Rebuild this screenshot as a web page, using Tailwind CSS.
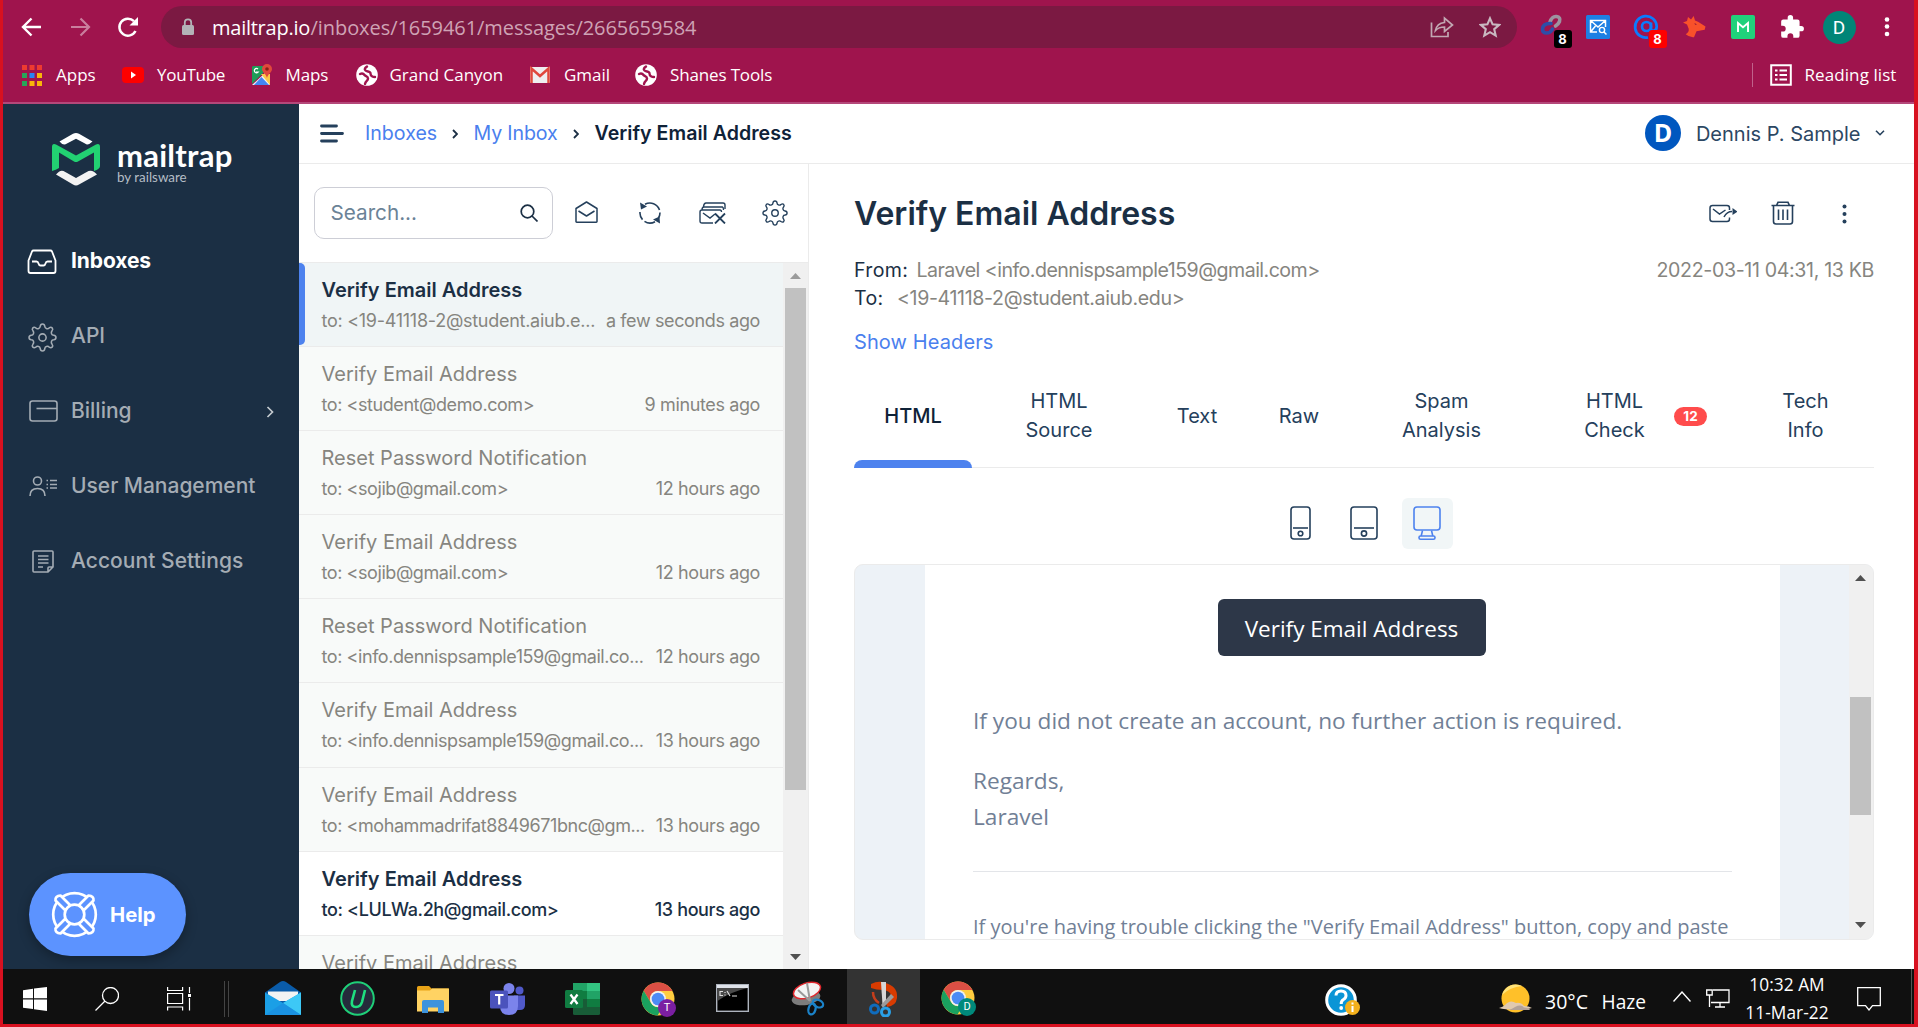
<!DOCTYPE html>
<html lang="en">
<head>
<meta charset="utf-8">
<title>Verify Email Address - Mailtrap</title>
<script src="https://cdn.jsdelivr.net/npm/@tailwindcss/browser@4"></script>
</head>
<body class="w-[1918px] h-[1027px] overflow-hidden bg-white">
<svg class="hidden">
  <defs>
    <symbol id="gear" viewBox="0 0 28 28"><g fill="none" stroke="currentColor" stroke-width="1.500" stroke-linejoin="round"><path d="M11.8 3.2Q12 1 14 1T16.200 3.200Q16.300 4.900 17.700 5.300Q19.300 6 20.400 4.800Q22.100 3.600 23.300 4.700Q24.500 6 23.200 7.600Q22.100 8.700 22.700 10.300Q23.200 11.700 24.800 11.800Q27 12 27 14T24.800 16.200Q23.200 16.300 22.700 17.700Q22.100 19.300 23.200 20.400Q24.500 22 23.300 23.300Q22.100 24.400 20.400 23.200Q19.300 22 17.700 22.700Q16.300 23.100 16.200 24.800Q16 27 14 27T11.800 24.800Q11.700 23.100 10.300 22.700Q8.700 22 7.600 23.200Q5.900 24.400 4.700 23.300Q3.500 22 4.800 20.400Q5.900 19.300 5.300 17.700Q4.800 16.300 3.200 16.200Q1 16 1 14T3.200 11.800Q4.800 11.700 5.300 10.300Q5.900 8.700 4.800 7.600Q3.500 6 4.700 4.700Q5.900 3.600 7.600 4.800Q8.700 6 10.300 5.300Q11.700 4.900 11.800 3.200Z"/><circle cx="14" cy="14" r="3.500"/></g></symbol>
    <symbol id="globe" viewBox="0 0 22 22"><circle cx="11" cy="11" r="10.800" fill="#fff"/><path d="M4 10c2-1 3.500-.5 4.500 1s3.500 1 3.500 3.500-2.500 2-3 5.500M11 2.500C9 4 8 5 9.500 6.500s5 .5 5 3 2.500 3.500 4.500 3.500" fill="none" stroke="#9f144d" stroke-width="2.400" stroke-linecap="round"/></symbol>
    <symbol id="chrome" viewBox="0 0 34 34"><circle cx="17" cy="17" r="16.500" fill="#ffcd40"/><path d="M2.700 8.800A16.500 16.500 0 0 1 31.500 9H17a8 8 0 0 0-7 12z" fill="#db4f44"/><path d="M2.700 8.800A16.500 16.500 0 0 0 16.500 33.500L24 21a8 8 0 0 1-14 0z" fill="#1aa15f"/><circle cx="17" cy="17" r="8" fill="#f1f1f1"/><circle cx="17" cy="17" r="6.300" fill="#4b8bf5"/></symbol>
  </defs>
</svg>
<div class="flex h-full w-full flex-col border-x-[3px] border-b-[3px] border-[#d81120] border-r-4">

  <!-- Browser toolbar -->
  <header class="flex h-[104px] shrink-0 flex-col border-b-2 border-[#b4487a] bg-[#9f144d] text-white font-['Open_Sans',sans-serif]">
    <div class="flex h-[54px] items-center pl-[17px]">
      <svg class="h-6 w-6 shrink-0" viewBox="0 0 24 24" fill="none" stroke="#fff" stroke-width="2.400"><path d="M21 12H3M11.500 3.500L3 12l8.500 8.500"/></svg>
      <svg class="ml-6 h-6 w-6 shrink-0 opacity-45" viewBox="0 0 24 24" fill="none" stroke="#fff" stroke-width="2.200"><path d="M3 12h18M12.500 3.500L21 12l-8.500 8.500"/></svg>
      <svg class="ml-6 h-6 w-6 shrink-0" viewBox="0 0 24 24"><path d="M19.500 16A8.500 8.500 0 1 1 18 6.200" fill="none" stroke="#fff" stroke-width="2.500"/><path d="M22 2v8.500h-8.500z" fill="#fff"/></svg>
      <div class="ml-[21px] flex h-[42px] w-[1356px] items-center rounded-full bg-[#7b1942] pl-[21px] text-[20px] whitespace-pre">
        <svg class="h-[18px] w-3 shrink-0" viewBox="0 0 12 18"><rect y="7" width="12" height="10" rx="1.500" fill="#b3b3b7"/><path d="M2.800 8V4.500a3.200 3.200 0 0 1 6.400 0V8" fill="none" stroke="#b3b3b7" stroke-width="1.800"/></svg>
        <span class="ml-[18px] w-[98.500px] tracking-[-0.25px] mt-px">mailtrap.io</span><span class="mt-px tracking-[-0.06px] text-[#cfa3b5]">/inboxes/1659461/messages/2665659584</span>
        <svg class="ml-auto h-[22px] w-6 shrink-0" viewBox="0 0 24 22" fill="none" stroke="#c2a8b3" stroke-width="1.700" stroke-linejoin="miter"><path d="M1.500 6.500V20.500H18V16"/><path d="M5.500 14.500C6.500 9 9.500 7 14.500 6.500V2l8 7-8 6.500V11c-4 0-6.500.7-9 3.500z"/></svg>
        <svg class="ml-[25px] mr-[16px] h-[22px] w-[22px] shrink-0" viewBox="0 0 22 22" fill="none" stroke="#c9b8c0" stroke-width="2.100"><path d="M11 2.300l2.600 6 6.500.6-4.900 4.300 1.500 6.400L11 16.200l-5.700 3.400 1.500-6.400L1.900 8.900l6.500-.6z"/></svg>
      </div>
      <div class="relative ml-[20.500px] h-[34px] w-[34px]">
        <svg class="h-8 w-8" viewBox="0 0 32 32" fill="none" stroke-width="3.600" stroke-linecap="round"><path d="M12 12q2-6 6.500-5.500 4.500.7 3 5-1 2.500-4 4.500" stroke="#9d93a0"/><path d="M13 13.500q-8-.5-8.500 5.500 0 4 4 4t6-4" stroke="#2d4ea8"/></svg>
        <span class="absolute top-[20px] left-[16px] h-[18px] w-[18px] rounded-[3px] bg-black text-center font-[Inter] text-[13px] leading-[19px] font-bold">8</span>
      </div>
      <svg class="ml-[14px] h-6 w-6 shrink-0" viewBox="0 0 24 24"><rect width="24" height="24" rx="1.500" fill="#1d7fe3"/><path d="M19.500 12V5.500h-15V17H11M4.500 5.500L12 12l7.500-6.500M4.500 17L9.500 11" fill="none" stroke="#fff" stroke-width="1.500"/><circle cx="16" cy="15" r="2.600" fill="none" stroke="#fff" stroke-width="1.400"/><path d="M18 17l2.500 2.500" stroke="#fff" stroke-width="1.500"/></svg>
      <div class="relative ml-[23px] h-[34px] w-[35px]">
        <svg class="mt-[4px] h-[26px] w-[26px]" viewBox="0 0 26 26" fill="none" stroke="#0a7cff" stroke-width="2.700"><circle cx="13.500" cy="12.500" r="4.500"/><path d="M18 8.500v6c0 3.500 5.700 3 5.700-2A10.800 10.800 0 1 0 15 23.500"/></svg>
        <span class="absolute top-[20px] left-[16px] h-[18px] w-[18px] rounded-[3px] bg-[#fe0000] text-center font-[Inter] text-[13px] leading-[19px] font-bold">8</span>
      </div>
      <svg class="ml-[15px] h-6 w-6 shrink-0" viewBox="0 0 24 24"><path d="M0 7.500L4 6l1-4 3 2.500 2.700-3.500L12 5.500l3 1.200 7.500 4.800-.8 3.200-8.200 1.500-2.500 6q-4.500.5-8.300-2.900Q6.500 17 5.600 13.500L4 9.500z" fill="#f9512a"/><path d="M11.500 8l2.500 1.500-2 .3z" fill="#8e1438"/></svg>
      <svg class="ml-[24px] h-6 w-6 shrink-0" viewBox="0 0 24 24"><rect width="24" height="24" rx="2" fill="#20d17b"/><path d="M7 17V8l5 4.300L17 8v9" fill="none" stroke="#fff" stroke-width="1.900"/></svg>
      <svg class="ml-[24px] h-[26px] w-[26px] shrink-0" viewBox="0 0 24 24" fill="#fff"><path d="M20.500 11H19V7a2 2 0 0 0-2-2h-4V3.500a2.500 2.500 0 0 0-5 0V5H4a2 2 0 0 0-2 2v3.800h1.500a2.700 2.700 0 0 1 0 5.400H2V20a2 2 0 0 0 2 2h3.800v-1.500a2.700 2.700 0 0 1 5.400 0V22H17a2 2 0 0 0 2-2v-4h1.500a2.500 2.500 0 0 0 0-5z"/></svg>
      <span class="ml-[18px] h-[33px] w-[33px] shrink-0 rounded-full bg-[#008577] text-center font-[Roboto] text-[19px] leading-[34px]">D</span>
      <svg class="ml-[28px] h-6 w-[6px] shrink-0" viewBox="0 0 6 24" fill="#fff"><circle cx="3" cy="4.500" r="2.300"/><circle cx="3" cy="11.500" r="2.300"/><circle cx="3" cy="19" r="2.300"/></svg>
    </div>
    <div class="flex h-[42px] items-center pl-[19px] text-[17px]">
      <svg class="h-[21px] w-5 shrink-0" viewBox="0 0 20 21"><path d="M0 0h5v5H0zM7.500 0h5v5h-5zM15 0h5v5h-5z" fill="#ee3b30"/><path d="M0 8h5v5H0z" fill="#27a559"/><path d="M7.500 8h5v5h-5z" fill="#2a83f5"/><path d="M15 8h5v5h-5zM7.500 16h5v5h-5zM15 16h5v5h-5z" fill="#f9b50a"/><path d="M0 16h5v5H0z" fill="#27a559"/></svg>
      <span class="ml-[14px] w-[66px]">Apps</span>
      <svg class="h-[18px] w-[22px] shrink-0" viewBox="0 0 22 18"><rect y="1" width="22" height="16" rx="4" fill="#fe0000"/><path d="M9 5.500v7l5-3.500z" fill="#fff"/></svg>
      <span class="ml-[13px] w-[94px] tracking-[-0.25px]">YouTube</span>
      <svg class="h-[22px] w-[22px] shrink-0" viewBox="0 0 22 22"><path d="M1 3v17L13 8V2H2z" fill="#1f9d58"/><path d="M1 21L14 9l5 12z" fill="#f2f2f2"/><path d="M3 21l7.500-8L18 21z" fill="#4285f4"/><path d="M10 10l9 11V10z" fill="#fbc94b"/><path d="M16 0a5 5 0 0 1 5 5c0 3.500-4 4.500-5 9-1-4.500-5-5.500-5-9a5 5 0 0 1 5-5z" fill="#e04a3c"/><circle cx="16" cy="5" r="1.800" fill="#8a1f17"/><path d="M7 5a2.200 2.200 0 1 0 .3 3H5" fill="none" stroke="#fff" stroke-width="1.200"/></svg>
      <span class="ml-[12.500px] w-[70px] tracking-[-0.1px]">Maps</span>
      <svg class="h-[22px] w-[22px] shrink-0"><use href="#globe"/></svg>
      <span class="ml-[12px] w-[139.500px]">Grand Canyon</span>
      <svg class="h-[18px] w-[22px] shrink-0" viewBox="0 0 22 18"><rect x="1" y="1" width="20" height="16" rx="1" fill="#efefef"/><path d="M2.500 17V2.500L11 10l8.500-7.500V17" fill="none" stroke="#e0483c" stroke-width="2.500"/></svg>
      <span class="ml-[13px] w-[71px]">Gmail</span>
      <svg class="h-[22px] w-[22px] shrink-0"><use href="#globe"/></svg>
      <span class="ml-[13px] tracking-[-0.15px]">Shanes Tools</span>
      <span class="ml-auto h-6 w-px bg-[#c0628b]"></span>
      <svg class="ml-[17px] h-[22px] w-[22px] shrink-0" viewBox="0 0 22 22" fill="none" stroke="#fff" stroke-width="2"><path d="M1.200 1.200h19.600v19.600H1.200z"/><path d="M5 6.500h2.500M9.500 6.500H17M5 11h2.500M9.500 11H17M5 15.500h2.500M9.500 15.500H17"/></svg>
      <span class="mr-[17.500px] ml-[12.500px] tracking-[0.08px]">Reading list</span>
    </div>
  </header>

  <!-- Mailtrap application -->
  <div class="flex h-[865px] shrink-0 font-[Inter,sans-serif] text-[#1b2f44]">
    <nav class="flex w-[296px] shrink-0 flex-col bg-[#1b2f44] text-[21px] font-medium text-[#a4acb4]">
      <div class="flex h-[119px] items-start pt-[28px] pl-[48px]">
        <svg class="h-[54px] w-[50px] shrink-0" viewBox="0 0 50 54"><path d="M8.500 9.500L22 1.800Q25 0 28 1.800L41.500 9.500Q37 14 34 11.500L25 6.800 16 11.500Q12 14 8.500 9.500z" fill="#fff"/><path d="M5 42.500Q9 37.500 12.500 39L25 46l12.500-7Q42 37.500 46 42.500L28 52.500Q25 54.500 22 52.500z" fill="#f2f2f2"/><path d="M1 15q0-4 4-2.500l20 11 20-11q4-1.500 4 2.500v19q0 3-6 5V20.500L27 29.500q-2 1-4 0L8 20.500V36q-3 2-7 3z" fill="#22d172"/></svg>
        <div class="ml-[16px] flex flex-col pt-[5px]">
          <span class="font-[Lato] text-[31px] leading-[36px] font-bold tracking-[0.25px] text-white">mailtrap</span>
          <span class="-mt-[4px] font-[Lato] text-[13.400px] leading-[16px] font-normal text-[#b4bdc6]">by railsware</span>
        </div>
      </div>
      <a class="flex h-[75px] items-center pl-[24px] font-bold text-white"><svg class="h-7 w-[30px]" viewBox="0 0 30 28" fill="none" stroke="#fff" stroke-width="1.800" stroke-linejoin="round"><path d="M6.500 3.500h17q1 0 1.500 1l3.500 9V24q0 2-2 2h-23q-2 0-2-2V13.500L5 4.500q.5-1 1.500-1z"/><path d="M5 14.500h4.500q1.500 0 2 2t2 2h3q1.500 0 2-2t2-2H25"/></svg><span class="ml-[14px] tracking-[-0.1px]">Inboxes</span></a>
      <a class="flex h-[75px] items-center pl-[25px]"><svg class="mt-1 h-[29px] w-[29px]"><use href="#gear"/></svg><span class="ml-[14px]">API</span></a>
      <a class="flex h-[75px] items-center pl-[26px]"><svg class="mt-px h-[22px] w-[29px]" viewBox="0 0 29 22" fill="none" stroke="#a4acb4" stroke-width="1.600"><rect x="1" y="1" width="27" height="20" rx="2.500"/><path d="M7.500 8.500H28"/></svg><span class="ml-[13px]">Billing</span><svg class="mt-[2px] mr-[25px] ml-auto h-3 w-2" viewBox="0 0 8 12" fill="none" stroke="#c5cbd0" stroke-width="1.700"><path d="M1.500 1l5 5-5 5"/></svg></a>
      <a class="flex h-[75px] items-center pl-[26px]"><svg class="mt-px h-5 w-7" viewBox="0 0 28 20" fill="none" stroke="#a4acb4" stroke-width="1.600"><circle cx="8.500" cy="5" r="4"/><path d="M1 20q0-7.500 7.500-7.500T16 20M21 4.500h7M21 8.500h7M21 12h7M17.500 4.500h1.500M17.500 8.500h1.500M17.500 12h1.500"/></svg><span class="ml-[14px] tracking-[-0.02px]">User Management</span></a>
      <a class="flex h-[75px] items-center pl-[29px]"><svg class="mt-px h-[23px] w-[22px]" viewBox="0 0 22 23" fill="none" stroke="#a4acb4" stroke-width="1.600"><path d="M1 2q0-1 1-1h18q1 0 1 1v15l-5 5H2q-1 0-1-1zM16 22v-4q0-1 1-1h4M6 6h10.500M6 9.500h10.500M6 13h10.500M6 17h5"/></svg><span class="ml-[17px] tracking-[0.05px]">Account Settings</span></a>
      <div class="mb-[13px] mt-auto ml-[26px] flex h-[83px] w-[157px] items-center rounded-full bg-[#5c93ff] pl-[22px] text-white shadow-[0_4px_12px_rgba(0,0,0,0.3)]">
        <svg class="h-[47px] w-[47px]" viewBox="0 0 47 47" fill="none" stroke="#fff" stroke-width="2.700"><circle cx="23.500" cy="23.500" r="21.300"/><g fill="#5c93ff" stroke-linejoin="round"><path d="M14.500 19.500L4.500 9.500Q4 5 9.500 4.500L19.500 14.500zM32.500 19.500L42.500 9.500Q43 5 37.500 4.500L27.500 14.500zM14.500 27.500L4.500 37.500Q4 42 9.500 42.500L19.500 32.500zM32.500 27.500L42.500 37.500Q43 42 37.500 42.500L27.500 32.500z"/><circle cx="23.500" cy="23.500" r="9.800"/></g></svg>
        <span class="mt-px ml-[12px] text-[20.300px] font-bold">Help</span>
      </div>
    </nav>

    <main class="flex min-w-0 grow flex-col">
      <div class="flex h-[60px] shrink-0 items-center border-b border-[#ebebeb] pl-[21px] text-[20px]">
        <svg class="h-[19px] w-6" viewBox="0 0 24 19" stroke="#25405c" stroke-width="2.800" stroke-linecap="round"><path d="M1.500 2h15M1.500 9.500h21M1.500 17h15"/></svg>
        <span class="ml-[21px] w-[72px] text-[19.600px] text-[#4a80ee]">Inboxes</span>
        <svg class="mt-px mr-[15.500px] ml-[15px] h-[10px] w-[6px]" viewBox="0 0 6 10" fill="none" stroke="#1b2f44" stroke-width="1.800"><path d="M1 1l4 4-4 4"/></svg>
        <span class="w-[84px] text-[19.600px] tracking-[-0.15px] text-[#4a80ee]">My Inbox</span>
        <svg class="mx-[15px] mt-px h-[10px] w-[6px]" viewBox="0 0 6 10" fill="none" stroke="#1b2f44" stroke-width="1.800"><path d="M1 1l4 4-4 4"/></svg>
        <span class="ml-[1px] text-[19.600px] font-semibold tracking-[0.03px] text-[#0f2238]">Verify Email Address</span>
        <span class="mb-px ml-auto h-9 w-9 rounded-full bg-[#0057bf] text-center font-['Open_Sans'] text-[25px] leading-[35px] font-bold text-white">D</span>
        <span class="ml-[15px] text-[20px] text-[#2c4763]">Dennis P. Sample</span>
        <svg class="mr-[29.500px] mb-px ml-[14px] h-[6px] w-[10px]" viewBox="0 0 10 6" fill="none" stroke="#25405c" stroke-width="1.600"><path d="M1 .7l4 4 4-4"/></svg>
      </div>

      <div class="flex min-h-0 grow">
        <!-- Message list -->
        <section class="flex w-[510px] shrink-0 flex-col border-r border-[#ebebeb]">
          <div class="flex h-[99px] shrink-0 items-center border-b border-[#ebebeb] pl-[15px] text-[#25405c]">
            <div class="flex h-[52px] w-[239px] items-center rounded-[10px] border border-[#cdced6] pl-[15.500px] text-[20.700px] text-[#6b8397]">Search...
              <svg class="mr-[14px] ml-auto h-[18px] w-[18px]" viewBox="0 0 18 18" fill="none" stroke="#1b2f44" stroke-width="1.700"><circle cx="7.500" cy="7.500" r="6.300"/><path d="M12 12l5.500 5.500"/></svg>
            </div>
            <svg class="mb-[2px] ml-[22px] h-[22px] w-[23px]" viewBox="0 0 23 22" fill="none" stroke="currentColor" stroke-width="1.500" stroke-linejoin="round"><path d="M1 7.500L11.500 1 22 7.500V20.500q0 .7-.7.700H1.700q-.7 0-.7-.7zM3.500 10l8 5 8-5"/></svg>
            <svg class="mb-px ml-[41px] h-[22px] w-[22px]" viewBox="0 0 22 22"><g fill="none" stroke="currentColor" stroke-width="1.600"><path d="M3.500 17.600A10 10 0 0 1 1 10M6 2.300A10 10 0 0 1 20.500 8M21 10.500q0 3-1.500 5.500M16 19.700A10 10 0 0 1 5.500 19.400"/></g><path d="M1 .5l1 7L8 4.500zM21 21.500l-.5-7-6.500 3z" fill="currentColor"/></svg>
            <svg class="mb-px ml-[38px] h-[22px] w-[27px]" viewBox="0 0 27 22" fill="none" stroke="currentColor" stroke-width="1.400"><path d="M14 21H3q-2 0-2-2V10q0-2 2-2h18q1.500 0 1.500 2M3 8q0-3 2-3h18.500q1 .3 1 3M4.500 4.500Q5 1 7 1h17q2 0 2 2v4M4 11l7 5 5-4"/><path d="M16 11.500L26 21.500M26 11.500L16 21.500" stroke-width="1.800"/></svg>
            <svg class="ml-[36px] h-[26px] w-[26px]"><use href="#gear"/></svg>
          </div>
          <div class="flex min-h-0 grow">
            <div id="messages" class="w-[484px] overflow-hidden"></div>
            <div class="flex w-[25px] flex-col items-center bg-[#f0f0f0] pt-[10px] pb-[9px]">
              <svg class="h-[6px] w-[11px] shrink-0" viewBox="0 0 11 6" fill="#9b9b9b"><path d="M0 6L5.500 0 11 6z"/></svg>
              <div class="mt-[9px] h-[502px] w-[21px] shrink-0 bg-[#c1c1c1]"></div>
              <svg class="mt-auto h-[6px] w-[11px]" viewBox="0 0 11 6" fill="#505050"><path d="M0 0L5.500 6 11 0z"/></svg>
            </div>
          </div>
        </section>

        <!-- Open message -->
        <section class="flex min-w-0 grow flex-col pr-[40px] pl-[45px]">
          <div class="flex h-[99px] shrink-0 items-center text-[#25405c]">
            <h1 class="text-[32px] font-semibold text-[#1b2f44]">Verify Email Address</h1>
            <svg class="ml-auto h-5 w-[28px]" viewBox="0 0 28 20" fill="none" stroke="currentColor" stroke-width="1.500"><path d="M20.500 6V4q0-2.500-2.500-2.500H3.500Q1 1.500 1 4v11q0 2.500 2.500 2.500H18q2.500 0 2.500-2.500v-1.500M4 5l6.500 5 6-4M15 13q3-5.500 8-5.500"/><path d="M23.500 4l5 3.700-5 3.300z" fill="currentColor" stroke="none"/></svg>
            <svg class="mb-px ml-[34px] h-6 w-6" viewBox="0 0 24 24" fill="none" stroke="currentColor" stroke-width="1.600"><path d="M0.500 4.500h23M5.500 4.500L7 1.300h10l1.500 3.200M2.500 5v15.500q0 2.500 2.500 2.500h14q2.500 0 2.500-2.500V5M7.500 8.500v10.500M12 8.500v10.500M16.500 8.500v10.500"/></svg>
            <svg class="mr-[27px] ml-[47px] h-5 w-[5px]" viewBox="0 0 5 20" fill="currentColor"><circle cx="2.500" cy="2.500" r="2"/><circle cx="2.500" cy="10" r="2"/><circle cx="2.500" cy="17.500" r="2"/></svg>
          </div>
          <div class="mt-[-7px] flex h-[28px] shrink-0 text-[19.600px] leading-[28px] whitespace-pre text-[#86857f]"><span class="w-[62.500px] tracking-[0.3px] text-[#1b2f44]">From:</span><span class="tracking-[-0.53px]">Laravel &lt;info.dennispsample159@gmail.com&gt;</span><span class="ml-auto tracking-[-0.35px]">2022-03-11 04:31, 13 KB</span></div>
          <div class="flex h-[28px] shrink-0 text-[19.600px] leading-[28px] whitespace-pre text-[#86857f]"><span class="w-[43px] tracking-[0.3px] text-[#1b2f44]">To:</span><span class="tracking-[-0.37px]">&lt;19-41118-2@student.aiub.edu&gt;</span></div>
          <div class="mt-[14.500px] h-[30.500px] shrink-0 text-[20px] leading-[30px] tracking-[0.1px] text-[#4a80ee]">Show Headers</div>
          <div class="mt-[8px] flex h-[103px] shrink-0 items-center border-b border-[#ebebeb] text-center text-[20px] leading-[29px] text-[#25405c]">
            <div class="relative flex h-full w-[118px] items-center justify-center font-medium text-[#0f2238]">HTML<span class="absolute bottom-[-1px] left-0 h-2 w-full rounded-t-[8px] bg-[#4d82ee]"></span></div>
            <div class="ml-[53px] w-[68px]">HTML<br>Source</div>
            <div class="ml-[83px] w-[42px]">Text</div>
            <div class="ml-[59px] w-[44px]">Raw</div>
            <div class="ml-[79.500px] w-[82px]">Spam<br>Analysis</div>
            <div class="ml-[100px] w-[64px]">HTML<br>Check</div>
            <span class="ml-[27.500px] h-[19px] w-[33px] rounded-full bg-[#ff4c4c] text-[13.500px] leading-[19px] font-bold text-white">12</span>
            <div class="ml-[74.500px] w-[48px]">Tech<br>Info</div>
          </div>
          <div class="mt-[30px] flex h-[51px] shrink-0 items-center pl-[436px] text-[#25405c]">
            <svg class="mb-px h-[34px] w-[21px]" viewBox="0 0 21 34" fill="none" stroke="currentColor" stroke-width="1.600"><rect x="1" y="1" width="19" height="32" rx="3"/><path d="M3 22h15"/><circle cx="10.500" cy="27.500" r="2.300"/></svg>
            <svg class="mb-px ml-[39px] h-[34px] w-[28px]" viewBox="0 0 28 34" fill="none" stroke="currentColor" stroke-width="1.600"><rect x="1" y="1" width="26" height="32" rx="3"/><path d="M4 22h20"/><circle cx="14" cy="27.500" r="2.600"/></svg>
            <div class="ml-[24px] flex h-[51px] w-[51px] items-center justify-center rounded-[6px] bg-[#f1f6f7]"><svg class="mr-px mb-px h-[34px] w-[28px]" viewBox="0 0 28 34" fill="none" stroke="#4d82ee" stroke-width="1.600"><rect x="1" y="1" width="26" height="23" rx="3"/><path d="M9.500 24.500l-1.300 5.500M18.500 24.500L19.800 30"/><rect x="6" y="30" width="16" height="3.200" rx="1.500"/></svg></div>
          </div>
          <div class="mt-[15px] flex h-[376px] shrink-0 overflow-hidden rounded-[9px] border border-[#ebebeb] bg-[#edf2f7]">
            <div class="ml-[70px] flex w-[855px] flex-col overflow-hidden bg-white px-[48px] pt-[34px] font-['Open_Sans',sans-serif] text-[22.650px] leading-[36px] text-[#718096]">
              <div class="mr-[2px] h-[57px] w-[268px] shrink-0 self-center rounded-[6px] bg-[#2d3748] text-center text-[22.500px] leading-[60px] text-white">Verify Email Address</div>
              <p class="mt-[47px]">If you did not create an account, no further action is required.</p>
              <p class="mt-[24px]">Regards,<br>Laravel</p>
              <div class="mt-[36px] h-px shrink-0 bg-[#e3e5e9]"></div>
              <p class="mt-[40px] text-[20px] leading-[30px] whitespace-nowrap">If you're having trouble clicking the "Verify Email Address" button, copy and paste</p>
            </div>
            <div class="ml-auto flex w-[24px] shrink-0 flex-col items-center bg-[#f0f0f0] pt-[10px] pr-[2px] pb-[11px]">
              <svg class="h-[6px] w-[11px] shrink-0" viewBox="0 0 11 6" fill="#505050"><path d="M0 6L5.500 0 11 6z"/></svg>
              <div class="mt-[116px] h-[118px] w-[21px] shrink-0 bg-[#c1c1c1]"></div>
              <svg class="mt-auto h-[6px] w-[11px]" viewBox="0 0 11 6" fill="#505050"><path d="M0 0L5.500 6 11 0z"/></svg>
            </div>
          </div>
        </section>
      </div>
    </main>
  </div>

  <!-- Windows taskbar -->
  <footer class="flex h-[55px] shrink-0 items-center bg-[#101010] pl-[20px] font-['Open_Sans',sans-serif] text-white">
    <svg class="mt-1 h-6 w-6" viewBox="0 0 24 24" fill="#fff"><path d="M0 3.200l10-1.400v9.400H0zM11 1.600L24 0v11.200H11zM0 12.500h10v9.600L0 20.800zM11 12.500h13V24l-13-1.700z"/></svg>
    <svg class="mt-1 ml-12 h-6 w-6" viewBox="0 0 24 24" fill="none" stroke="#fff" stroke-width="1.300"><circle cx="15.500" cy="8.500" r="8"/><path d="M10 14L.500 23.500"/></svg>
    <svg class="mt-1 ml-12 h-6 w-6" viewBox="0 0 24 24" fill="none" stroke="#fff" stroke-width="1.200"><path d="M.6 0v3.500h15V0M.6 6.500h15v10H.6zM.6 23.500V20h15v3.500M22.500 0v6M22.500 11v12.500"/><path d="M21 7h3v3h-3z" fill="#fff" stroke="none"/></svg>
    <span class="mt-1 ml-[33px] h-9 w-[5px] border-x border-[#444]"></span>
    <svg class="mt-[3px] ml-[36px] h-[34px] w-9" viewBox="0 0 36 34"><path d="M0 11.500L15 1q3-2 6 0l15 10.500V22H0z" fill="#0a5ba8"/><path d="M3 10.500h30V20H3z" fill="#f3f3f3"/><path d="M0 11.500L18 22l18-10.500V34H0z" fill="#1b9fe6"/><path d="M36 11.500V34L18 22z" fill="#3dc8f6"/><path d="M18 22l18 12H0z" fill="#1a92e2"/></svg>
    <svg class="mt-[4px] ml-[39px] h-[35px] w-[35px]" viewBox="0 0 35 35"><circle cx="17.500" cy="17.500" r="16.300" fill="#252b3b" stroke="#1fcf78" stroke-width="2"/><path d="M15 9l-3 11q-1.300 6 4 6 4.500 0 6-5L25 9" fill="none" stroke="#1fe080" stroke-width="2.600"/></svg>
    <svg class="mt-[5px] ml-[42px] h-[27px] w-8" viewBox="0 0 32 27"><path d="M0 1.500Q0 0 1.500 0H12l2.500 2.500H31q1 0 1 1V25H0z" fill="#e8a317"/><path d="M0 4.500h13L15 2.500h17V25.500H0z" fill="#ffd363"/><path d="M5 27V16q0-2 2-2h18q2 0 2 2v11h-6v-5.500H11V27z" fill="#3d93dc"/></svg>
    <svg class="mt-[4px] ml-[41px] h-8 w-[35px]" viewBox="0 0 35 32"><circle cx="19" cy="5.500" r="5.500" fill="#7b83eb"/><circle cx="29.500" cy="7.500" r="4" fill="#5059c9"/><path d="M24 12.500h11V22q0 5-5 5h-5z" fill="#5059c9"/><path d="M10 12.500h18V23q0 9-9 9t-9-9z" fill="#7b83eb"/><rect y="7.500" width="18" height="18" rx="1.500" fill="#4b53bc"/><path d="M5 12h8.500M9.200 12v9.500" stroke="#fff" stroke-width="2.200"/></svg>
    <svg class="mt-[4px] ml-[40px] h-8 w-[35px]" viewBox="0 0 35 32"><rect x="8" width="27" height="32" rx="1.500" fill="#185c37"/><path d="M8 0h14v8H8z" fill="#21a366"/><path d="M22 0h13v8H22z" fill="#33c481"/><path d="M8 8h14v8H8z" fill="#107c41"/><path d="M22 8h13v8H22z" fill="#21a366"/><path d="M22 16h13v8H22z" fill="#107c41"/><rect y="7" width="18" height="18" rx="1.500" fill="#107c41"/><path d="M5.500 11.500l7 9.500M12.500 11.500l-7 9.500" stroke="#fff" stroke-width="2.300"/></svg>
    <div class="relative mt-[4px] ml-[41px] h-[34px] w-[34px]"><svg class="h-[34px] w-[34px]"><use href="#chrome"/></svg><span class="absolute top-[17px] left-[17px] h-[18px] w-[18px] rounded-full bg-[#7b1fa2] text-center font-[Roboto] text-[11px] leading-[18px]">T</span></div>
    <svg class="mt-[3px] ml-[41px] h-[28px] w-[33px]" viewBox="0 0 33 28"><rect x=".7" y=".7" width="31.600" height="26.600" fill="#000" stroke="#aeb4be" stroke-width="1.400"/><path d="M1 1h31v3H1z" fill="#dfe3ea"/><path d="M1.500 4h30Q14 8 1.500 17z" fill="#4a4a4a"/><path d="M7 7.500H4v4h3M9 8v1M9 10.500v1M11 7l3 5M16 12h5" fill="none" stroke="#ddd" stroke-width="1.200"/></svg>
    <svg class="mt-[3px] ml-[42px] h-[35px] w-[34px]" viewBox="0 0 34 35"><ellipse cx="15" cy="17" rx="14.500" ry="7" transform="rotate(-10 15 17)" fill="#7c7c7c"/><ellipse cx="16" cy="9.500" rx="14" ry="7.500" transform="rotate(-18 16 9.500)" fill="#f4f4f4" stroke="#e0282e" stroke-width="1.500"/><path d="M16 2l3 18M7 9l12 11" stroke="#999" stroke-width="2"/><ellipse cx="27" cy="22.500" rx="5.500" ry="3.500" transform="rotate(25 27 22.500)" fill="none" stroke="#1b83c9" stroke-width="2.300"/><ellipse cx="21" cy="28" rx="3.500" ry="5.500" transform="rotate(15 21 28)" fill="none" stroke="#1b83c9" stroke-width="2.300"/></svg>
    <div class="ml-[22px] flex h-full w-[73px] items-center justify-center bg-[#333]"><svg class="mt-[4px] h-[36px] w-[30px]" viewBox="0 0 30 36"><path d="M2 3q8-4 14-1 13 3 12 15-1 8-10 9l-1-4q5-1 5-7 0-5-8-6Q7 9 2 7z" fill="#d83b01"/><path d="M4 11q0 7 6 11" fill="none" stroke="#c43e1c" stroke-width="2.500"/><path d="M12 1h5v23h-3.500z" fill="#d6d6d6"/><path d="M22 13l3 3-11 11-2-3z" fill="#9b9b9b"/><circle cx="5.500" cy="28" r="4" fill="none" stroke="#0f6cbd" stroke-width="3"/><circle cx="16.500" cy="31" r="4" fill="none" stroke="#2aa0e6" stroke-width="3"/></svg></div>
    <div class="relative mt-[3px] ml-[21px] h-[34px] w-[34px]"><svg class="h-[34px] w-[34px]"><use href="#chrome"/></svg><span class="absolute top-[17px] left-[17px] h-[18px] w-[18px] rounded-full bg-[#00897b] text-center font-[Roboto] text-[11px] leading-[18px]">D</span></div>
    <svg class="mt-[8px] ml-auto h-[33px] w-[36px]" viewBox="0 0 36 33"><circle cx="16" cy="16" r="14.300" fill="#0b95d6" stroke="#fff" stroke-width="3"/><path d="M11 11.500q0-4.500 5-4.500t5 4.500q0 2.500-2.500 4T16.200 20" fill="none" stroke="#fff" stroke-width="3"/><circle cx="16.200" cy="24" r="1.900" fill="#fff"/><circle cx="27.500" cy="23.500" r="7.500" fill="#f3b01c"/><path d="M27.500 22v6M27.500 18.500v2" stroke="#fff" stroke-width="2"/></svg>
    <svg class="mt-[5px] ml-[137px] h-[30px] w-[35px]" viewBox="0 0 35 30"><circle cx="17.500" cy="14.500" r="14" fill="#ffc029"/><path d="M4 11A14 14 0 0 1 24 2Q12 3 4 11z" fill="#ffe37a"/><path d="M1 24q4-1 6-3 5-6 11-2 5-1 8 3 5 0 8 2-4 1.500-16 1.500T1 24z" fill="#e0c9b0"/><path d="M11 26q3-1 6-3 6-3 9 .5 5 0 6 2.500z" fill="#b3a298"/></svg>
    <span class="mt-[10px] ml-[12.500px] w-[56.500px] text-[19.500px] leading-6">30°C</span>
    <span class="mt-[10px] w-[44.500px] text-[19.200px] leading-6">Haze</span>
    <svg class="ml-[27px] h-[11px] w-[18px]" viewBox="0 0 18 11" fill="none" stroke="#fff" stroke-width="1.400"><path d="M.5 10.500L9 1l8.500 9.500"/></svg>
    <svg class="mt-1 ml-[15px] h-[19px] w-[24px]" viewBox="0 0 24 19" fill="none" stroke="#fff" stroke-width="1.300"><path d="M7 1h16v12.500H5M.7 1h5.500v5H.7zM3.500 6v12M14 13.500V18M9 18h10"/></svg>
    <div class="mt-[4px] ml-[13px] flex w-[88px] flex-col items-center text-[17.300px] leading-[27.500px] tracking-[0.05px]"><span>10:32 AM</span><span>11-Mar-22</span></div>
    <svg class="mt-1 ml-[26px] h-6 w-6" viewBox="0 0 24 24" fill="none" stroke="#fff" stroke-width="1.300"><path d="M.7.700h22.600v18H15.500L12 23l-3.500-4.300H.7z"/></svg>
    <span class="mr-[2px] ml-[30px] h-full w-px bg-[#555]"></span>
  </footer>
</div>
<script>
const messages = [
  ['Verify Email Address', '<19-41118-2@student.aiub.e...', 'a few seconds ago', 'selected'],
  ['Verify Email Address', '<student@demo.com>', '9 minutes ago', 'read'],
  ['Reset Password Notification', '<sojib@gmail.com>', '12 hours ago', 'read'],
  ['Verify Email Address', '<sojib@gmail.com>', '12 hours ago', 'read'],
  ['Reset Password Notification', '<info.dennispsample159@gmail.co...', '12 hours ago', 'read'],
  ['Verify Email Address', '<info.dennispsample159@gmail.co...', '13 hours ago', 'read'],
  ['Verify Email Address', '<mohammadrifat8849671bnc@gm...', '13 hours ago', 'read'],
  ['Verify Email Address', '<LULWa.2h@gmail.com>', '13 hours ago', 'unread'],
  ['Verify Email Address', '', '', 'read'],
];
const row = { selected: 'bg-[#f0f5f6]', read: 'bg-[#f8faf9]', unread: 'bg-white' };
const title = { selected: 'font-semibold text-[#1b2f44]', read: 'text-[#86857f]', unread: 'font-semibold text-[#1b2f44]' };
const sub = { selected: 'text-[#86857f]', read: 'text-[#86857f]', unread: 'font-medium text-[#1b2f44]' };
const address = { selected: 'tracking-[-0.27px]', read: 'tracking-[-0.43px]', unread: 'tracking-[-0.38px]' };
document.getElementById('messages').innerHTML = messages.map(([t, to, when, s]) => `
  <div class="relative h-[84.100px] border-b border-[#ebebeb] pt-[13px] pr-[23px] pl-[22.500px] whitespace-nowrap ${row[s]}">
    ${s === 'selected' ? '<span class="absolute top-0 left-0 h-[82px] w-[6px] rounded-r-[5px] bg-[#4d82ee]"></span>' : ''}
    <div class="text-[20px] leading-[28px] ${title[s]}">${t}</div>
    <div class="flex justify-between text-[18px] leading-[33px] ${sub[s]}"><span class="${address[s]}">${to ? 'to: ' + to.replace('<', '&lt;').replace('>', '&gt;') : ''}</span><span class="tracking-[-0.38px]">${when}</span></div>
  </div>`).join('');
</script>
</body>
</html>
